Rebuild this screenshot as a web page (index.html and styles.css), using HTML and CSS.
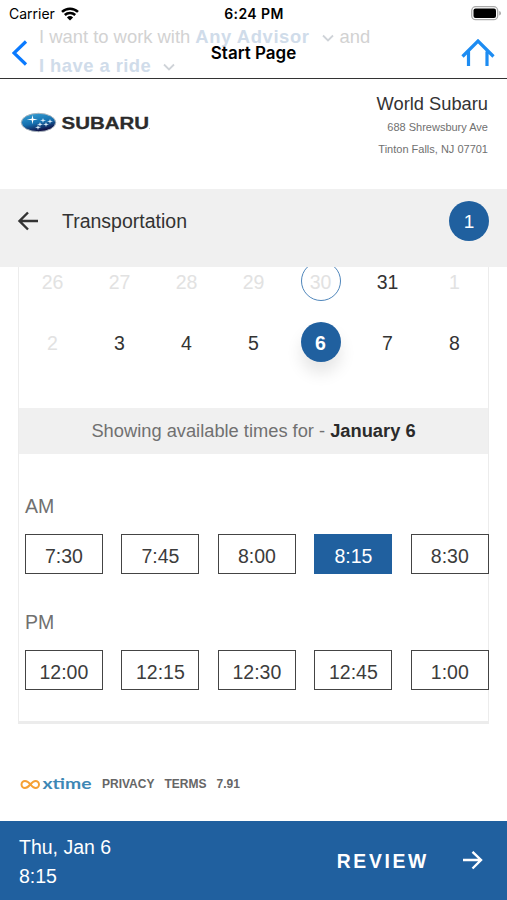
FILE: index.html
```
<!DOCTYPE html>
<html lang="en">
<head>
    <meta charset="UTF-8">
    <meta name="viewport" content="width=device-width, initial-scale=1.0">
    <title>Start Page</title>
    <link rel="stylesheet" href="styles.css">
</head>
<body>

<header class="top">
    <!-- preferences scrolled under the nav bar -->
    <div class="prefs">
        <p><span class="want">I want to work with</span> <b class="advisor">Any Advisor</b>
            <svg class="chev" width="12" height="8" viewBox="0 0 12 8"><path d="M1 1.5l5 5 5-5"/></svg>
            <span class="and">and</span></p>
        <p><b class="ride">I have a ride</b>
            <svg class="chev" width="12" height="8" viewBox="0 0 12 8"><path d="M1 1.5l5 5 5-5"/></svg></p>
    </div>
    <div class="status">
        <div class="carrier">
            <span>Carrier</span>
            <svg width="18" height="14" viewBox="0 0 18 14">
                <path d="M1 4.9a11.5 11.5 0 0 1 16 0M3.8 8a7.5 7.5 0 0 1 10.4 0" fill="none" stroke="#000" stroke-width="2.5"/>
                <path d="M9 13.6L5.9 10.5a4.5 4.5 0 0 1 6.2 0z"/>
            </svg>
        </div>
        <div class="clock">6:24 PM</div>
        <svg class="battery" width="31" height="15" viewBox="0 0 31 15">
            <rect x=".7" y=".7" width="26" height="13" rx="4" fill="#fff" stroke="#aaa" stroke-width="1.3"/>
            <rect x="2.5" y="2.5" width="22.5" height="9.4" rx="2"/>
            <path d="M28.2 5v4.5q1.8-.6 1.8-2.25T28.2 5z" fill="#aaa"/>
        </svg>
    </div>
    <nav class="nav">
        <svg width="16" height="26" viewBox="0 0 16 26"><path d="M14 1.5L2 13l12 11.5" fill="none" stroke="#0a7aff" stroke-width="3.2"/></svg>
        <h1>Start Page</h1>
        <svg class="home" width="34" height="28" viewBox="0 0 34 28"><path d="M1.5 17.500L17 2l15.500 15.500M7.500 12.500V27M26 12.500V27" fill="none" stroke="#1d8cf2" stroke-width="3.2"/></svg>
    </nav>
</header>

<section class="dealer">
    <svg class="logo" width="132" height="22" viewBox="0 0 132 22">
        <defs>
            <linearGradient id="oval" x1="0" y1="0" x2=".4" y2="1">
                <stop offset="0" stop-color="#3aa5d8"/>
                <stop offset=".6" stop-color="#1570b0"/>
                <stop offset="1" stop-color="#101348"/>
            </linearGradient>
        </defs>
        <ellipse cx="18.5" cy="10.5" rx="17.2" ry="9.2" fill="url(#oval)" stroke="#aab4bd"/>
        <path d="M12.5 3l.8 3.700 4.500.8-4.500.8-.8 4-.8-4-5-.8 5-.8z" fill="#fff"/>
        <g fill="#dceefa">
            <path id="star" d="M23 6l.6 1.700 2.400.6-2.400.6L23 11l-.6-2.100-2.400-.6 2.400-.6z"/>
            <use href="#star" x="7" y="1"/>
            <use href="#star" x="3" y="4"/>
            <use href="#star" x="-3" y="4"/>
            <use href="#star" x="-5" y="7"/>
        </g>
        <text x="41.5" y="17" textLength="87.5" lengthAdjust="spacingAndGlyphs" class="brand">SUBARU</text>
        <circle cx="129.5" cy="16.5" r=".5" fill="#999"/>
    </svg>
    <div class="address">
        <h2>World Subaru</h2>
        <p>688 Shrewsbury Ave</p>
        <p>Tinton Falls, NJ 07701</p>
    </div>
</section>

<div class="step">
    <svg width="22" height="20" viewBox="0 0 22 20"><path d="M21 10H2.500M11 1.500L2.500 10l8.500 8.500" fill="none" stroke="#333" stroke-width="2.4"/></svg>
    <span class="step-name">Transportation</span>
    <span class="step-count">1</span>
</div>

<main class="card">
    <div class="calendar">
        <span class="off">26</span><span class="off">27</span><span class="off">28</span><span class="off">29</span>
        <span class="off today">30</span><span>31</span><span class="off">1</span>
        <span class="off">2</span><span>3</span><span>4</span><span>5</span>
        <span class="picked">6</span><span>7</span><span>8</span>
    </div>
    <div class="showing">Showing available times for - <b>January 6</b></div>
    <div class="times">
        <h3>AM</h3>
        <div class="slots">
            <button>7:30</button>
            <button>7:45</button>
            <button>8:00</button>
            <button class="active">8:15</button>
            <button>8:30</button>
        </div>
        <h3>PM</h3>
        <div class="slots">
            <button>12:00</button>
            <button>12:15</button>
            <button>12:30</button>
            <button>12:45</button>
            <button>1:00</button>
        </div>
    </div>
</main>

<footer class="links">
    <svg width="73" height="20" viewBox="0 0 73 20">
        <path d="M11.500 10.500C9.500 8 8 7 6 7a3.500 3.500 0 0 0 0 7c4.500 0 6-7 10.500-7a3.500 3.500 0 0 1 0 7c-2 0-3-1-5-3.500z" fill="none" stroke="#f5a034" stroke-width="2"/>
        <text x="23.5" y="14.5" textLength="49" lengthAdjust="spacingAndGlyphs" class="xtime">xtime</text>
    </svg>
    <a>PRIVACY</a>
    <a>TERMS</a>
    <span>7.91</span>
</footer>

<div class="review">
    <div class="chosen">
        <div>Thu, Jan 6</div>
        <div>8:15</div>
    </div>
    <div class="review-btn">REVIEW</div>
    <svg width="22" height="20" viewBox="0 0 22 20"><path d="M1 9h18M10.500.8L19 9l-8.500 8.500" fill="none" stroke="#fff" stroke-width="2.4"/></svg>
</div>

</body>
</html>
```
FILE: styles.css
```
* {
    box-sizing: border-box;
    margin: 0;
    padding: 0;
}
body {
    display: flex;
    flex-direction: column;
    height: 900px;
    overflow: hidden;
    background-color: #fff;
    color: #333;
    font-family: "Liberation Sans", Arial, sans-serif;
}
svg {
    display: block;
    flex: none;
}
.top {
    position: relative;
    height: 79px;
    flex: none;
    border-bottom: 1px solid #333;
    color: #000;
    font-family: Inter, sans-serif;
}
.prefs {
    position: absolute;
    left: 39px;
    top: 22px;
    color: #d2d2d2;
    font: 18.4px/29px "Liberation Sans", Arial, sans-serif;
}
.prefs p {
    display: flex;
    align-items: center;
}
.prefs b {
    color: #d0dcea;
}
.advisor {
    margin-left: 5px;
    letter-spacing: 0.6px;
}
.ride {
    letter-spacing: 0.45px;
}
.chev {
    margin: 2px 6px 0 12px;
    fill: none;
    stroke: #cfd3d8;
    stroke-width: 1.8;
}
.status {
    position: relative;
    display: grid;
    grid-template-columns: 1fr auto 1fr;
    height: 27px;
    align-items: center;
    padding: 0 5px 0 6px;
    font-size: 14px;
}
.carrier {
    display: flex;
    align-items: center;
    gap: 6px;
    padding-left: 3px;
}
.clock {
    font-weight: 600;
    letter-spacing: 0.4px;
}
.battery {
    justify-self: end;
}
.nav {
    position: relative;
    display: grid;
    grid-template-columns: 1fr auto 1fr;
    align-items: center;
    height: 51px;
    padding: 0 12px;
}
.nav h1 {
    font-size: 17px;
    font-weight: 600;
}
.home {
    justify-self: end;
}
.dealer {
    display: flex;
    justify-content: space-between;
    height: 110px;
    flex: none;
    padding: 14px 19px 0 20px;
}
.logo {
    margin-top: 19px;
}
.brand {
    font: bold 16px "Liberation Sans", Arial, sans-serif;
    fill: #2b2b2b;
    stroke: #2b2b2b;
    stroke-width: 0.3;
}
.address {
    text-align: right;
    color: #707070;
    font-size: 11px;
}
.address h2 {
    color: #333;
    font-size: 18.3px;
    font-weight: normal;
    line-height: 22px;
}
.address p {
    padding-top: 2px;
    line-height: 20px;
}
.step {
    display: flex;
    align-items: center;
    height: 78px;
    flex: none;
    padding: 0 18px 14px 17px;
    background-color: #f0f0f0;
}
.step-name {
    flex: 1;
    margin-left: 23px;
    font-size: 19.5px;
}
.step-count {
    width: 40px;
    height: 40px;
    border-radius: 50%;
    background-color: #20609f;
    color: #fff;
    font-size: 19px;
    line-height: 42px;
    text-align: center;
}
.card {
    height: 457px;
    flex: none;
    margin: 0 18px;
    border: solid #ececec;
    border-width: 0 1px 3px 1px;
}
.calendar {
    display: grid;
    grid-template-columns: repeat(7, 67px);
    grid-auto-rows: 61px;
    align-items: center;
    align-content: start;
    justify-content: center;
    justify-items: center;
    height: 141px;
    overflow: hidden;
    font-size: 19.5px;
}
.calendar span {
    width: 40px;
    height: 40px;
    margin-bottom: 33px;
    line-height: 42px;
    text-align: center;
}
.calendar .off {
    color: #e2e2e2;
}
.calendar .today {
    border: 1.5px solid #4f86bb;
    border-radius: 50%;
    line-height: 40px;
}
.calendar .picked {
    border-radius: 50%;
    background-color: #20609f;
    color: #fff;
    font-weight: bold;
    box-shadow: 0 11px 16px rgba(0, 0, 0, 0.1);
}
.showing {
    height: 46px;
    background-color: #f0f0f0;
    color: #707070;
    font-size: 18.3px;
    line-height: 46px;
    text-align: center;
}
.showing b {
    color: #2b2b2b;
}
.times {
    padding: 41px 0 0 6px;
}
.times h3 {
    color: #707070;
    font-size: 19.5px;
    font-weight: normal;
    line-height: 22px;
}
.slots {
    display: flex;
    gap: 18.7px;
    margin: 17px 0 37px;
}
.slots button {
    width: 77.8px;
    height: 40px;
    flex: none;
    padding-top: 4px;
    border: 1.5px solid #444;
    background-color: #fff;
    color: #3c3c3c;
    font: 19.5px "Liberation Sans", Arial, sans-serif;
}
.slots .active {
    border-color: #20609f;
    background-color: #20609f;
    color: #fff;
}
.links {
    display: flex;
    align-items: center;
    gap: 10px;
    height: 97px;
    flex: none;
    padding: 23px 0 0 19px;
    color: #666;
    font-size: 12px;
    font-weight: bold;
}
.xtime {
    font: bold 14.5px Lato, sans-serif;
    fill: #3d87b5;
}
.review {
    display: flex;
    align-items: center;
    flex: 1;
    padding: 0 23px 0 19px;
    background-color: #20609f;
    color: #fff;
}
.chosen {
    flex: 1;
    padding-top: 2px;
    font-size: 19.5px;
    line-height: 29px;
}
.review-btn {
    margin-right: 33px;
    padding-top: 2px;
    font-size: 19.3px;
    font-weight: bold;
    letter-spacing: 2.7px;
}
```
